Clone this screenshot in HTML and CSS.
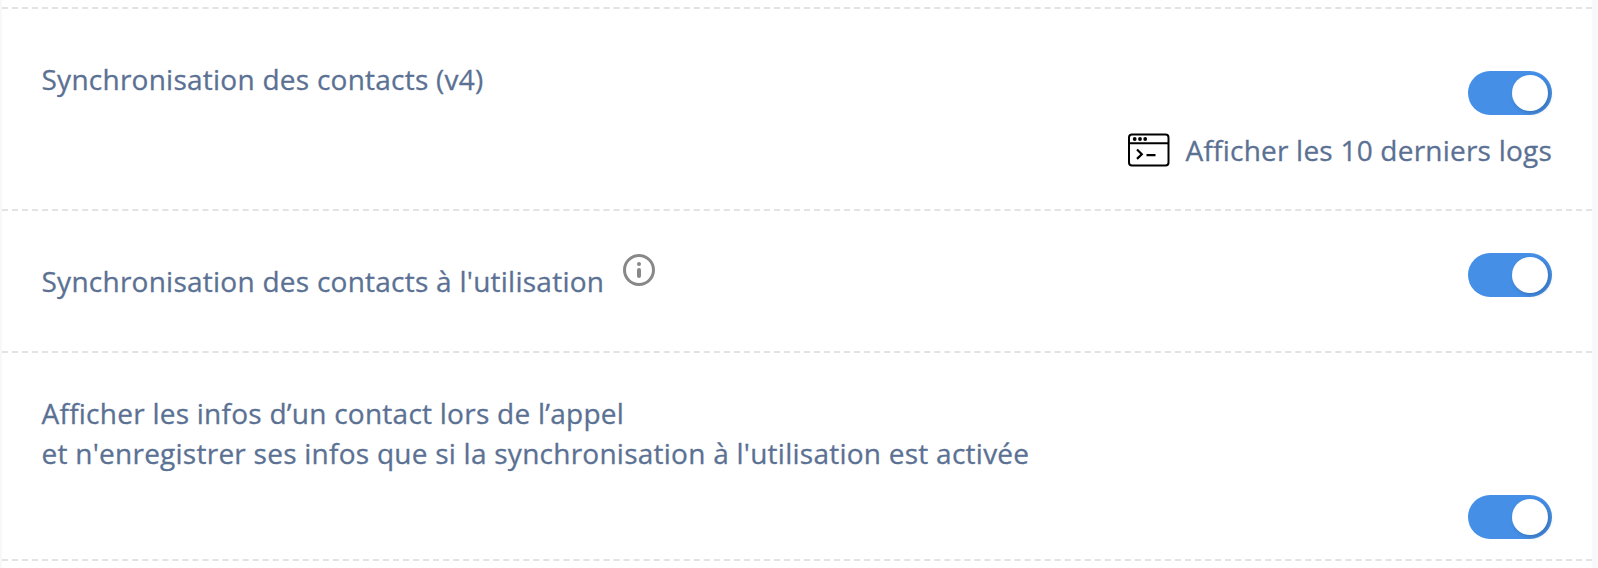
FILE: index.html
```html
<!DOCTYPE html>
<html lang="fr">
<head>
  <meta charset="utf-8">
  <title>Synchronisation des contacts</title>
  <link rel="stylesheet" href="styles.css">
</head>
<body>
  <div class="settings">
    <div class="row row-sync">
      <div class="label">Synchronisation des contacts (v4)</div>
      <div class="actions">
        <button class="switch" role="switch" aria-checked="true"><span class="knob"></span></button>
        <a class="logs">
          <svg class="logs-icon" width="42" height="34" viewBox="0 0 42 34" fill="none" stroke="#000" stroke-width="2">
            <rect x="1" y="1.500" width="39.500" height="31" rx="3"/>
            <path d="M1 10.300h39.500"/>
            <path d="M9 16.500l4.800 4.700-4.800 4.700M18.500 22.200h9" stroke-width="2.200"/>
            <g fill="#000" stroke="none">
              <circle cx="6.700" cy="6" r="1.900"/>
              <circle cx="12" cy="6" r="1.900"/>
              <circle cx="17.200" cy="6" r="1.900"/>
            </g>
          </svg>
          <span>Afficher les 10 derniers logs</span>
        </a>
      </div>
    </div>
    <div class="row row-usage">
      <div class="label">
        <span>Synchronisation des contacts à l'utilisation</span>
        <svg class="info" width="32" height="32" viewBox="0 0 32 32">
          <circle cx="16" cy="16" r="14.500" fill="none" stroke="#888" stroke-width="3"/>
          <circle cx="16" cy="10" r="2" fill="#888"/>
          <rect x="14" y="14" width="4" height="10" rx="2" fill="#888"/>
        </svg>
      </div>
      <button class="switch" role="switch" aria-checked="true"><span class="knob"></span></button>
    </div>
    <div class="row row-call">
      <div class="label">Afficher les infos d’un contact lors de l’appel<br>et n'enregistrer ses infos que si la synchronisation à l'utilisation est activée</div>
      <button class="switch" role="switch" aria-checked="true"><span class="knob"></span></button>
    </div>
  </div>
</body>
</html>
```

FILE: styles.css
```css
* {
  box-sizing: border-box;
}

body {
  margin: 0;
  background: #f8f8fa;
  font-family: "Open Sans", sans-serif;
  font-size: 28px;
  letter-spacing: 0.25px;
  line-height: 40px;
  color: #5b7193;
  -webkit-text-stroke: 0.3px #5b7193;
}

.settings {
  height: 568px;
  margin: 0 6px 0 2px;
  padding-top: 7px;
  background: #fff;
}

.row {
  display: flex;
  justify-content: space-between;
  padding: 0 40px 0 39.5px;
  border-top: 2px dashed #e3e3e3;
}

.row-sync {
  height: 202px;
  padding-top: 50px;
}

.row-usage {
  height: 142px;
  padding-top: 42px;
}

.row-usage .label {
  display: flex;
  align-items: flex-start;
  gap: 19px;
}

.row-usage .label span {
  padding-top: 8px;
}

.row-call {
  height: 210px;
  padding-top: 40px;
  border-bottom: 2px dashed #e3e3e3;
}

.row-call .switch {
  margin-top: 102px;
}

.actions {
  display: flex;
  flex-direction: column;
  align-items: flex-end;
  padding-top: 12px;
}

.switch {
  width: 84px;
  height: 44px;
  padding: 4px;
  border: 0;
  border-radius: 22px;
  background: #458fe7;
}

.knob {
  display: block;
  width: 36px;
  height: 36px;
  margin-left: auto;
  border-radius: 50%;
  background: #fff;
  box-shadow: 2px 2px 4px rgba(0, 0, 0, 0.2);
}

.logs {
  display: flex;
  align-items: center;
  gap: 16px;
  margin-top: 15px;
  letter-spacing: 0.22px;
}

.info {
  margin-top: 1px;
}
```
